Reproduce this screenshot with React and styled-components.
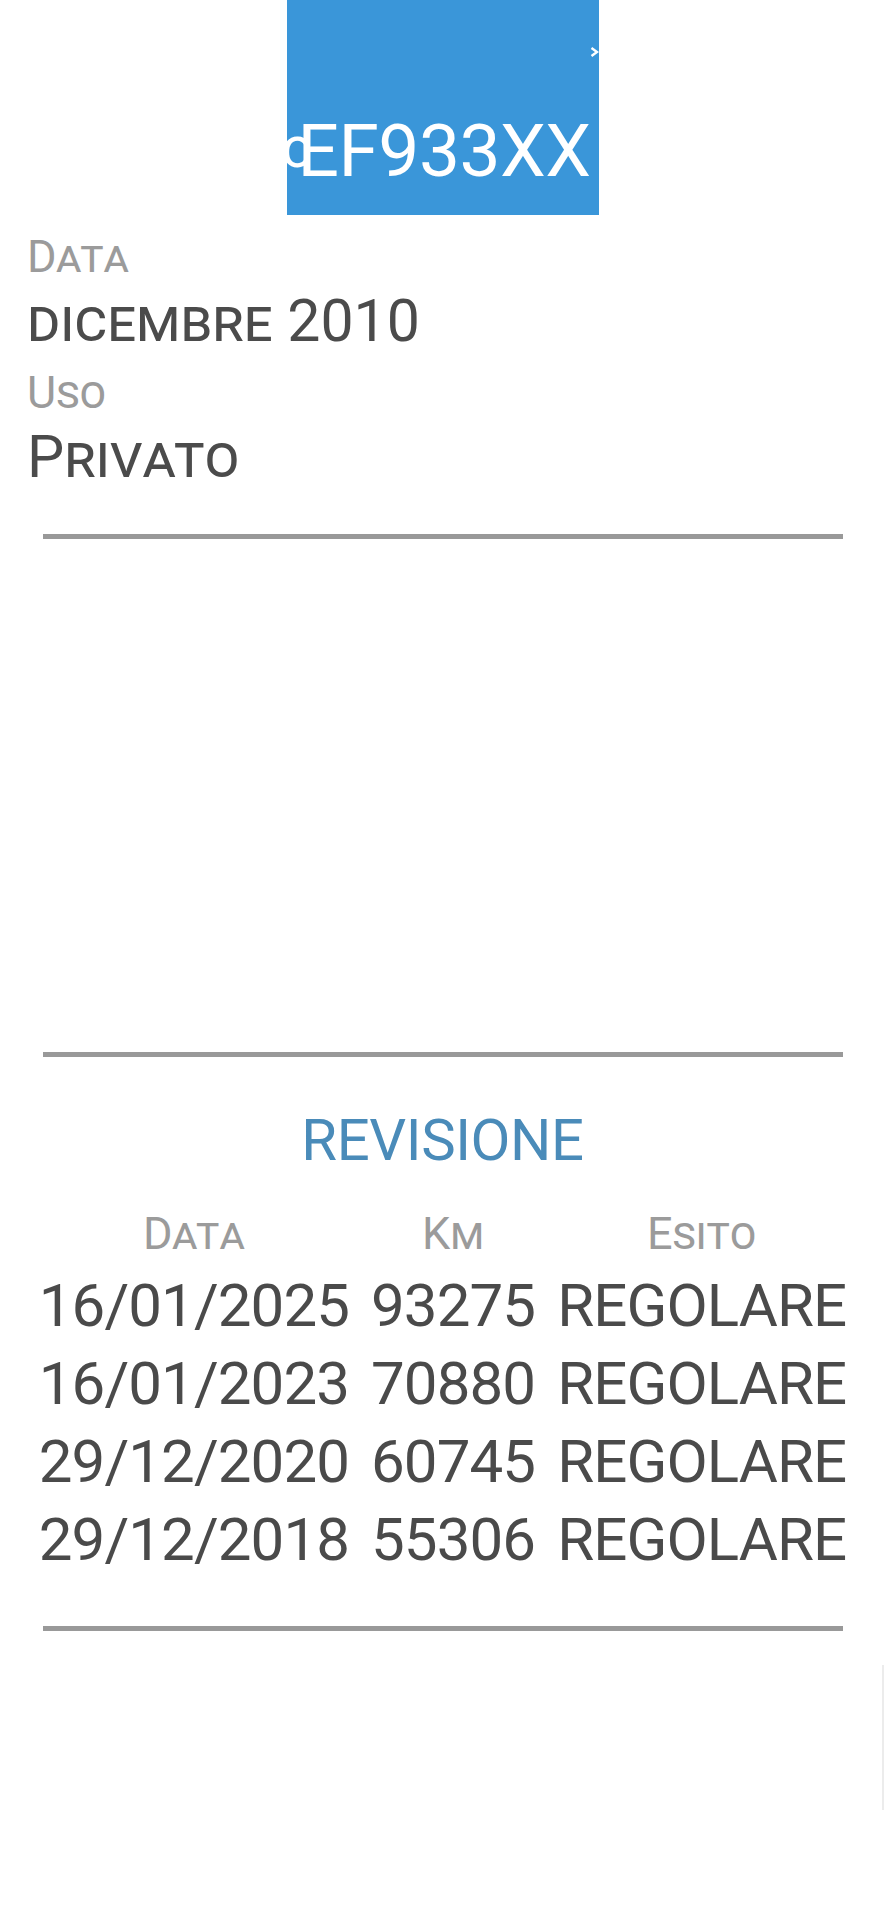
import React from "react";
import styled, { createGlobalStyle } from "styled-components";

const Global = createGlobalStyle`
  html, body { margin: 0; padding: 0; background: #ffffff; }
  body { font-family: Roboto, "Noto Sans", "Liberation Sans", sans-serif; }
`;

const Page = styled.div`
  position: relative;
  width: 885px;
  min-height: 1920px;
  background: #fff;
  display: flex;
  flex-direction: column;
  overflow: hidden;
`;

const PlateBox = styled.div`
  position: relative;
  align-self: center;
  width: 312px;
  height: 215px;
  background: #3a96d9;
  overflow: hidden;
  display: flex;
  align-items: flex-end;
  justify-content: flex-end;
  padding-right: 8px;
  box-sizing: border-box;
`;

const PlateText = styled.div`
  color: #ffffff;
  font-size: 73px;
  line-height: 1;
  padding-bottom: 27px;
  white-space: nowrap;
  letter-spacing: -0.5px;
`;

const Ghost = styled.span`
  display: inline-block;
  font-size: 58px;
  vertical-align: 9px;
  margin-right: -14px;
  letter-spacing: 0;
`;

const Chevron = styled.svg`
  position: absolute;
  top: 46px;
  right: 0px;
  width: 9px;
  height: 12px;
`;

const Fields = styled.div`
  display: flex;
  flex-direction: column;
  padding: 4px 0 0 27px;
`;

const Label = styled.div`
  margin-top: 8px;
  font-size: 45px;
  line-height: 60px;
  color: #9b9b9b;
  font-variant: small-caps;
`;

const Value = styled.div`
  font-size: 59px;
  line-height: 68px;
  color: #4b4b4b;
  font-variant: small-caps;
`;

const Rule = styled.div`
  height: 5px;
  background: #999999;
  margin: ${(p) => p.$mt || 0}px 42px 0 43px;
`;

const Spacer = styled.div`
  height: ${(p) => p.$h}px;
`;

const Title = styled.div`
  margin-top: 48px;
  text-align: center;
  font-size: 58px;
  line-height: 70px;
  color: #4a8bb9;
  letter-spacing: -0.4px;
`;

const Table = styled.table`
  align-self: center;
  border-collapse: collapse;
  border-spacing: 0;
  margin-top: 26px;
`;

const HeadCell = styled.th`
  font-weight: 400;
  font-size: 45px;
  line-height: 66px;
  color: #9b9b9b;
  font-variant: small-caps;
  padding: 0 11px;
  text-align: center;
`;

const Cell = styled.td`
  font-size: 60px;
  line-height: 78px;
  color: #4a4a4a;
  padding: 0 11px;
  text-align: center;
  white-space: nowrap;
  letter-spacing: -0.9px;
`;

const ScrollHint = styled.div`
  position: absolute;
  right: 1px;
  top: 1665px;
  width: 2px;
  height: 145px;
  background: #ececec;
`;

const rows = [
  ["16/01/2025", "93275", "REGOLARE"],
  ["16/01/2023", "70880", "REGOLARE"],
  ["29/12/2020", "60745", "REGOLARE"],
  ["29/12/2018", "55306", "REGOLARE"],
];

export default function App() {
  return (
    <>
      <Global />
      <Page>
        <PlateBox>
          <PlateText>
            <Ghost>c</Ghost>EF933XX
          </PlateText>
          <Chevron viewBox="0 0 9 12">
            <path d="M1.5 2 L7 6 L1.5 10" stroke="#fff" strokeWidth="2.4" fill="none" />
          </Chevron>
        </PlateBox>
        <Fields>
          <Label>Data</Label>
          <Value>dicembre 2010</Value>
          <Label>Uso</Label>
          <Value>Privato</Value>
        </Fields>
        <Rule $mt={43} />
        <Spacer $h={513} />
        <Rule />
        <Title>REVISIONE</Title>
        <Table>
          <thead>
            <tr>
              <HeadCell>Data</HeadCell>
              <HeadCell>Km</HeadCell>
              <HeadCell>Esito</HeadCell>
            </tr>
          </thead>
          <tbody>
            {rows.map((r) => (
              <tr key={r[0]}>
                <Cell>{r[0]}</Cell>
                <Cell>{r[1]}</Cell>
                <Cell>{r[2]}</Cell>
              </tr>
            ))}
          </tbody>
        </Table>
        <Rule $mt={47} />
        <ScrollHint />
      </Page>
    </>
  );
}
